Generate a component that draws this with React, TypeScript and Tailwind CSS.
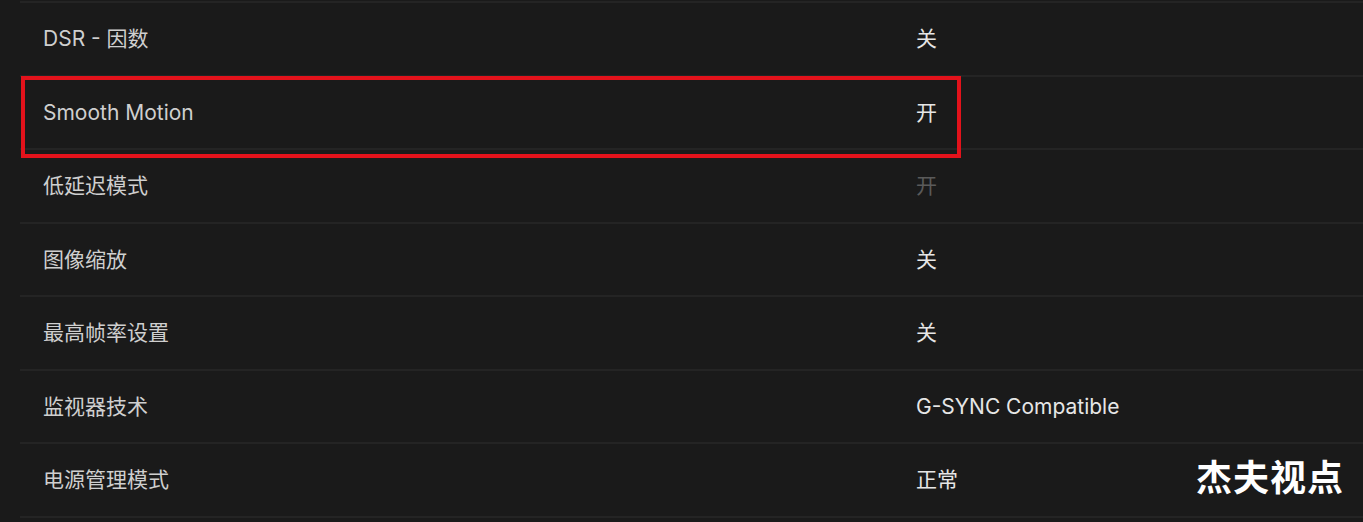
import { ReactNode } from 'react'

interface Setting {
  label: string
  value: ReactNode
  muted?: boolean
}

const settings: Setting[] = [
  { label: 'DSR - 因数', value: '关' },
  { label: 'Smooth Motion', value: '开' },
  { label: '低延迟模式', value: '开', muted: true },
  { label: '图像缩放', value: '关' },
  { label: '最高帧率设置', value: '关' },
  { label: '监视器技术', value: 'G-SYNC Compatible' },
  { label: '电源管理模式', value: '正常' },
]

const font = { fontFamily: 'Inter, "Noto Sans CJK SC", sans-serif' }

export default function App() {
  return (
    <div className="relative w-[1363px] h-[522px] overflow-hidden bg-[#1a1a1a]" style={font}>
      {/* 设置列表 */}
      <div className="pt-[1px] pl-[20px]">
        {settings.map((s, i) => (
          <div
            key={s.label}
            className={`flex items-center h-[73.5px] border-t-2 border-[#242424] ${
              i === settings.length - 1 ? 'border-b-2 h-[75.5px]' : ''
            }`}
          >
            <div className="w-[896px] pl-[23px] text-[21px] text-[#cfcfcf]">{s.label}</div>
            <div className={`text-[21px] ${s.muted ? 'text-[#5a5a5a]' : 'text-[#e6e6e6]'}`}>{s.value}</div>
          </div>
        ))}
      </div>

      {/* 红色标注框 */}
      <div className="absolute left-[21px] top-[76px] w-[940px] h-[82px] border-4 border-[#e3121b]" />

      {/* 水印 */}
      <div className="absolute left-[1196px] top-[460px] text-[36px] font-bold text-white leading-none tracking-[1px]">
        杰夫视点
      </div>
    </div>
  )
}
